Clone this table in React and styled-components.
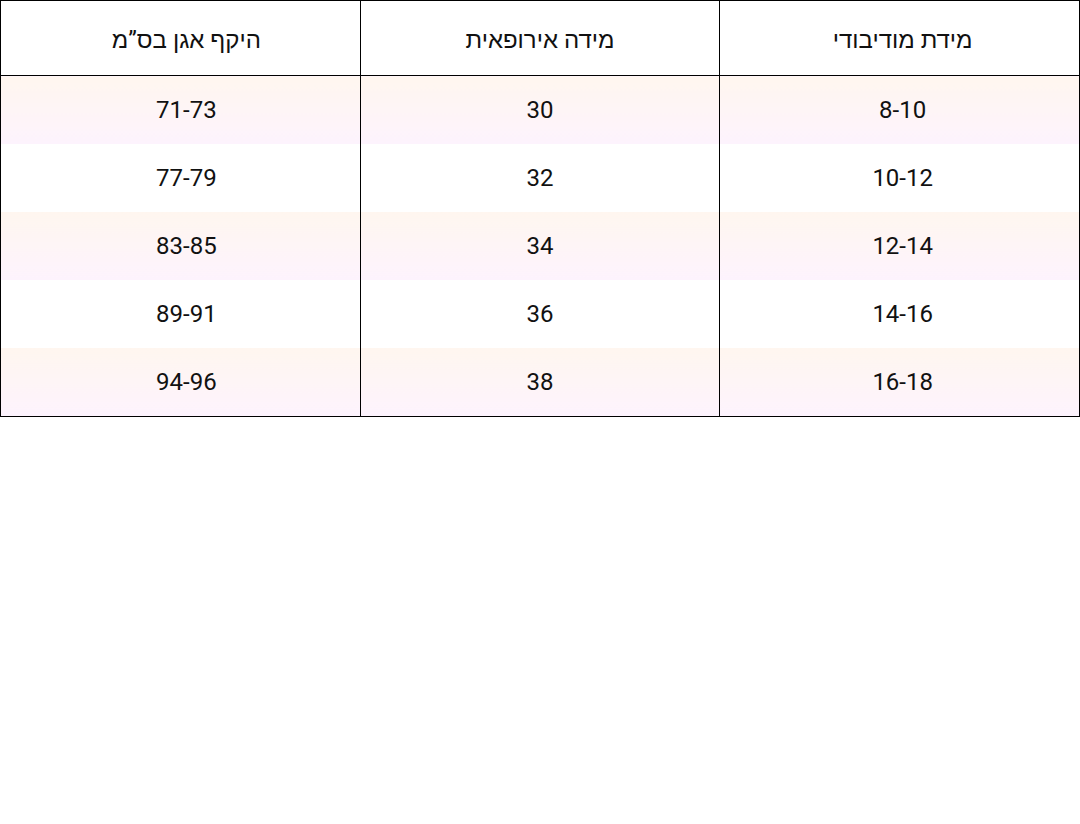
import React from "react";
import styled, { createGlobalStyle } from "styled-components";

const Global = createGlobalStyle`
  html, body { margin: 0; padding: 0; background: #fff; }
  body { font-family: Roboto, "Liberation Sans", sans-serif; }
`;

const stripe = "linear-gradient(180deg, #fff6ef 0%, #fdf3fd 100%)";
const colShift = ["6px", "0px", "12px"];

const Table = styled.table`
  width: 1080px;
  border-collapse: collapse;
  direction: rtl;
  table-layout: fixed;
  border: 1px solid #000;
  color: #111;
  font-family: Roboto, "Liberation Sans", sans-serif;
  font-size: 24px;
`;

const HeadCell = styled.th`
  font-weight: 400;
  height: 70px;
  padding: 4px 0 0 ${(p) => colShift[p.$col]};
  text-align: center;
  vertical-align: middle;
  border: 1px solid #000;
`;

const Cell = styled.td`
  height: 68px;
  padding: 0 0 0 ${(p) => colShift[p.$col]};
  text-align: center;
  vertical-align: middle;
  border-left: 1px solid #000;
  border-right: 1px solid #000;
  background: ${(p) => (p.$striped ? stripe : "#fff")};
`;

const headers = ["מידת מודיבודי", "מידה אירופאית", "היקף אגן בס”מ"];
const rows = [
  ["8-10", "30", "71-73"],
  ["10-12", "32", "77-79"],
  ["12-14", "34", "83-85"],
  ["14-16", "36", "89-91"],
  ["16-18", "38", "94-96"],
];

export default function App() {
  return (
    <>
      <Global />
      <Table>
        <thead>
          <tr>
            {headers.map((h, j) => (
              <HeadCell key={h} $col={j}>
                {h}
              </HeadCell>
            ))}
          </tr>
        </thead>
        <tbody>
          {rows.map((r, i) => (
            <tr key={i}>
              {r.map((c, j) => (
                <Cell key={j} $col={j} $striped={i % 2 === 0}>
                  {c}
                </Cell>
              ))}
            </tr>
          ))}
        </tbody>
      </Table>
    </>
  );
}
